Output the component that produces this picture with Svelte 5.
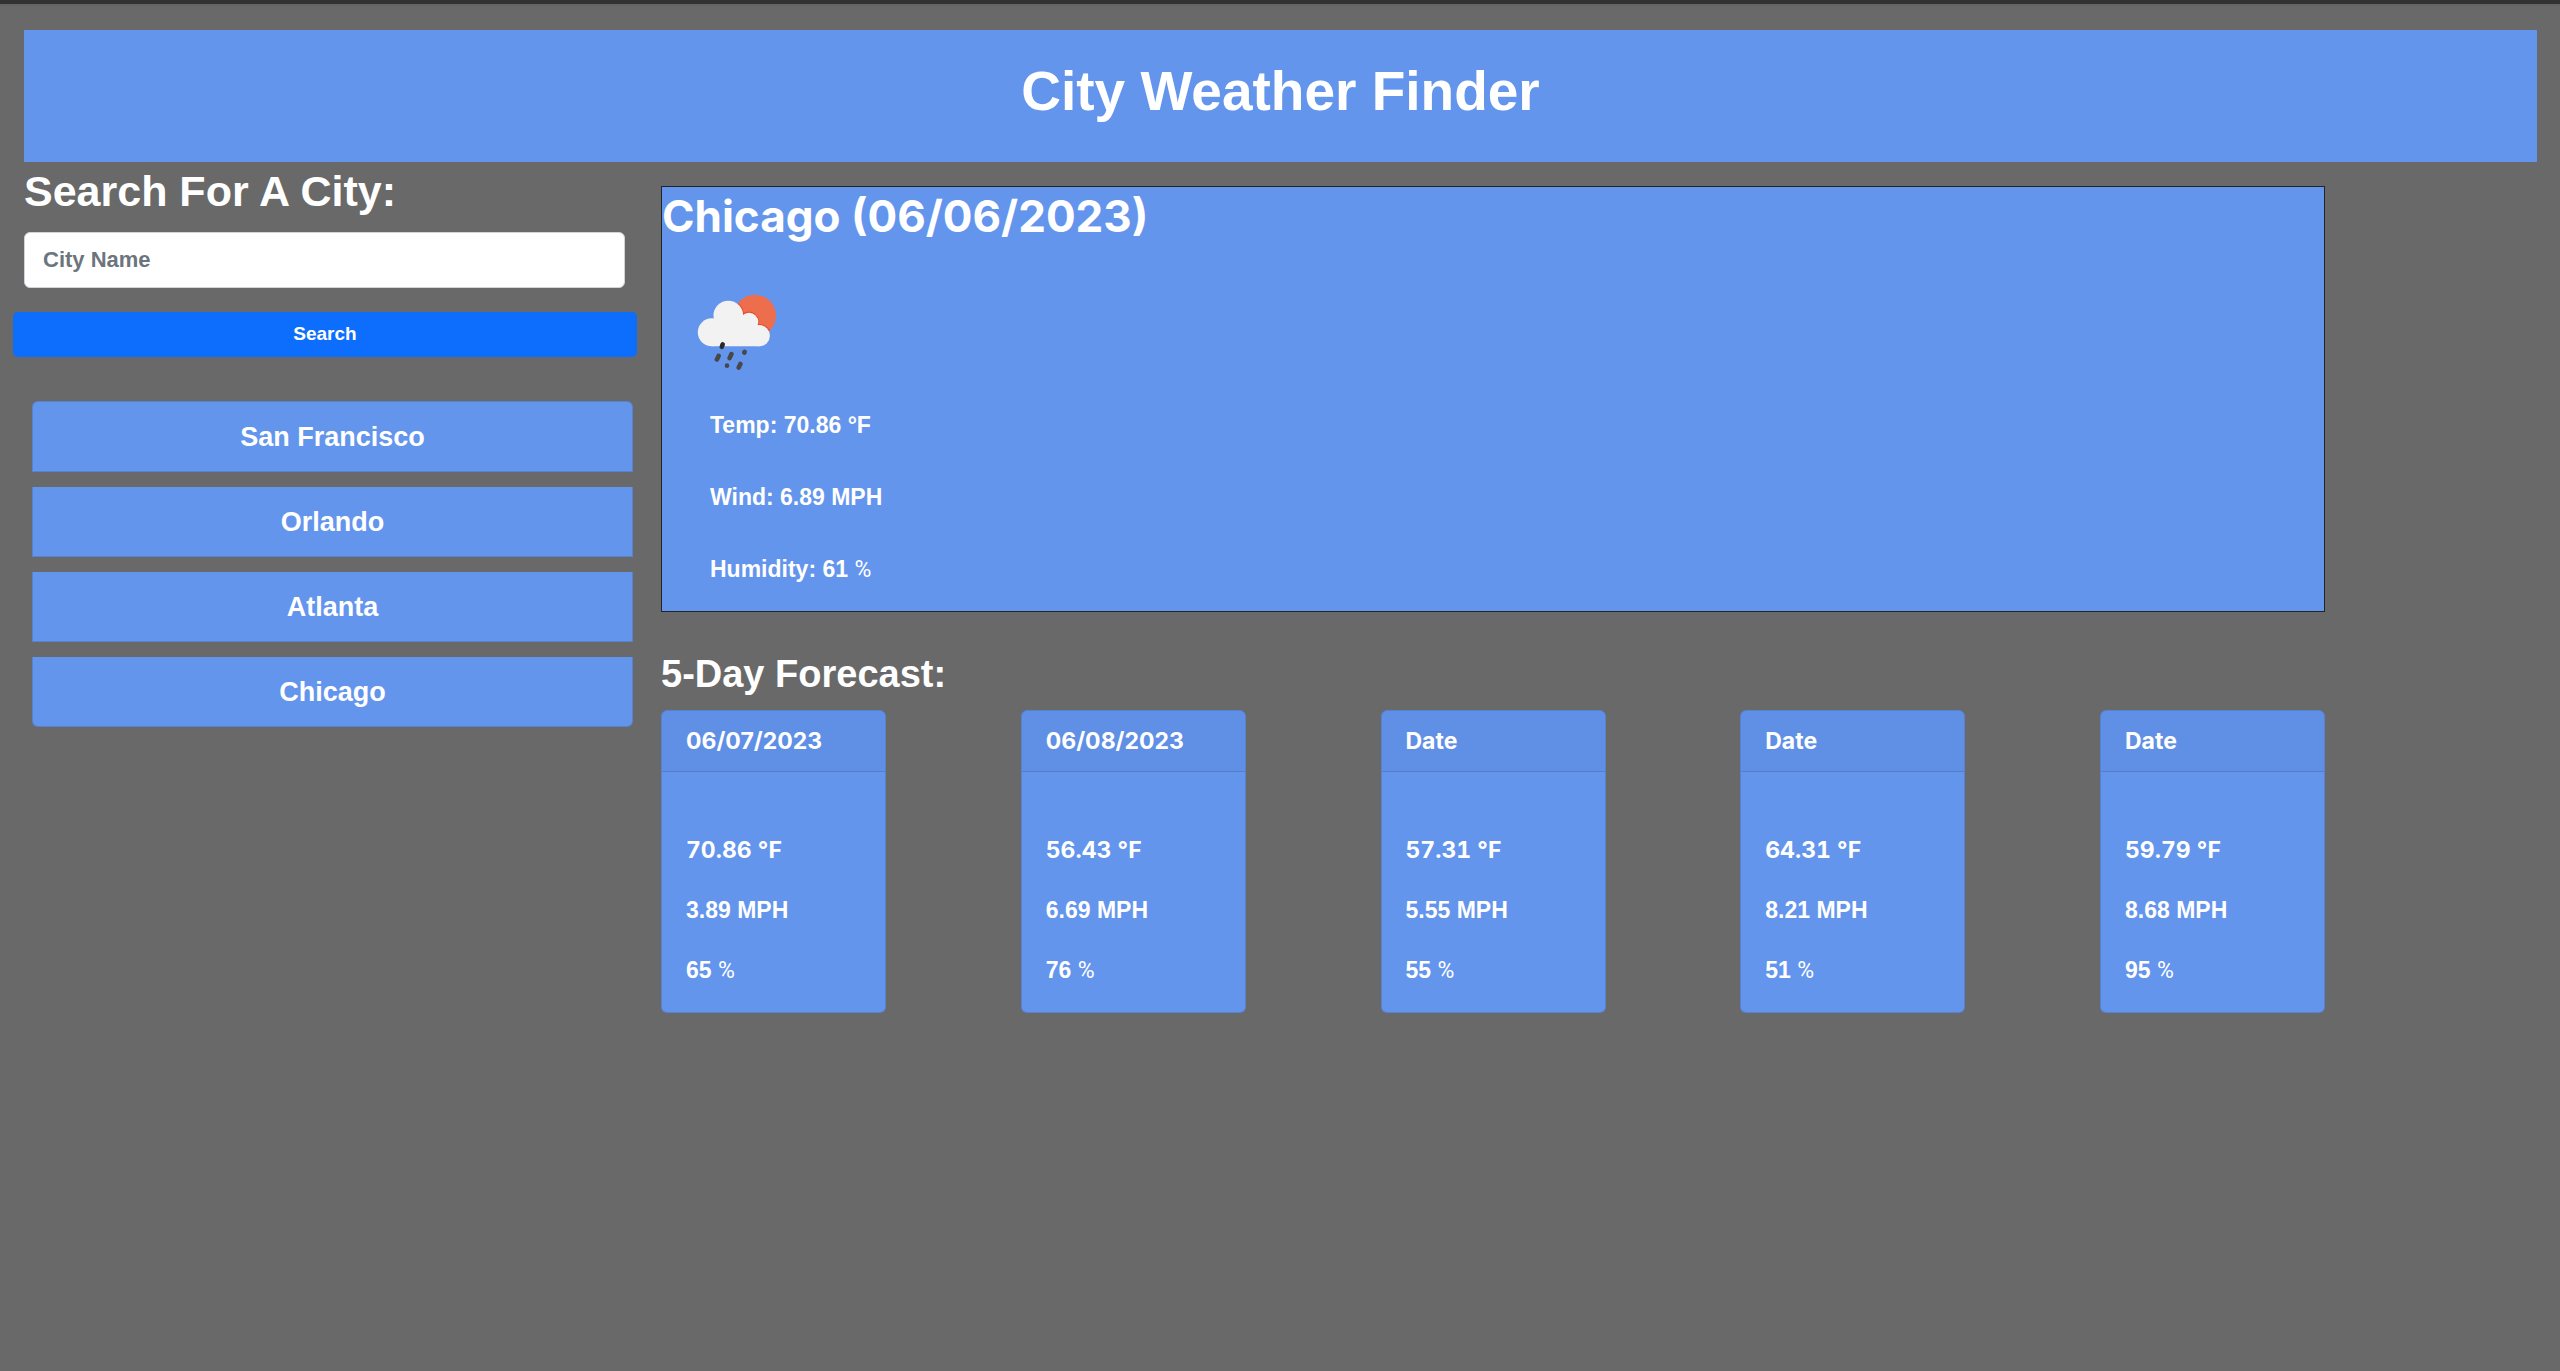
<script>
  let city = $state('');

  const savedCities = ['San Francisco', 'Orlando', 'Atlanta', 'Chicago'];

  const forecast = [
    { date: '06/07/2023', temp: '70.86', wind: '3.89', humidity: '65' },
    { date: '06/08/2023', temp: '56.43', wind: '6.69', humidity: '76' },
    { date: 'Date', temp: '57.31', wind: '5.55', humidity: '55' },
    { date: 'Date', temp: '64.31', wind: '8.21', humidity: '51' },
    { date: 'Date', temp: '59.79', wind: '8.68', humidity: '95' },
  ];
</script>

<div class="page">
  <header>
    <h1>City Weather Finder</h1>
  </header>

  <div class="layout">
    <aside>
      <form onsubmit={(e) => e.preventDefault()}>
        <label for="city">Search For A City:</label>
        <input id="city" type="text" placeholder="City Name" bind:value={city} />
        <button class="search" type="submit">Search</button>
      </form>

      <div class="history">
        {#each savedCities as name}
          <button type="button">{name}</button>
        {/each}
      </div>
    </aside>

    <main>
      <section class="current">
        <h2>Chicago (06/06/2023)</h2>
        <svg viewBox="14 10 84 80" role="img" aria-label="Rain with sun">
          <defs>
            <clipPath id="sun"><circle cx="75" cy="35.7" r="21" /></clipPath>
          </defs>
          <circle cx="75" cy="35.7" r="21" fill="#ec6e4c" />
          <g clip-path="url(#sun)" fill="none" stroke="#e94e2b" stroke-width="2">
            <circle cx="48.3" cy="35.5" r="14.8" />
            <circle cx="69" cy="42" r="9.4" />
            <circle cx="79.3" cy="55.7" r="10.8" />
          </g>
          <g fill="#f2f2f2">
            <circle cx="48.3" cy="35.5" r="14.8" />
            <circle cx="31.8" cy="52.3" r="14" />
            <circle cx="69" cy="42" r="9.3" />
            <circle cx="79.3" cy="55.7" r="10.6" />
            <path d="M31.8 66.3V40l8-4h24l10 8 5.5 3v19.3z" />
          </g>
          <g fill="none" stroke="#484848" stroke-width="4.6" stroke-linecap="round">
            <path d="M42.7 64.4l-.9 2.4" stroke="#2a2a2a" />
            <path d="M38.6 75.9l-1.7 3.6M51.4 74.1l-1.8 4M64.6 71.8l-.3.8M47 85.6v.1M60.4 84l-1.7 3.6" />
          </g>
        </svg>
        <p>Temp: 70.86 °F</p>
        <p>Wind: 6.89 MPH</p>
        <p>Humidity: 61 <span class="unit">%</span></p>
      </section>

      <section class="forecast">
        <h3>5-Day Forecast:</h3>
        <div class="cards">
          {#each forecast as day}
            <article>
              <h4>{day.date}</h4>
              <div class="readings">
                <p class="wide">{day.temp} °F</p>
                <p>{day.wind} MPH</p>
                <p>{day.humidity} <span class="unit">%</span></p>
              </div>
            </article>
          {/each}
        </div>
      </section>
    </main>
  </div>
</div>

<style>
  :global(body) {
    background: #696969;
  }

  .page {
    border-top: 4px solid #333;
    color: #fff;
    font: bold 23px/36px 'Liberation Sans', Arial, sans-serif;
  }

  .page::before {
    content: '';
    display: block;
    height: 2px;
    background: #656565;
  }

  h1, h2, h3, h4, p {
    margin: 0;
  }

  header {
    margin: 24px 23px 0 24px;
    padding: 25px 0 35px;
    background: #6495ed;
    text-align: center;
  }

  h1 {
    font-size: 55px;
    line-height: 72px;
  }

  .layout {
    display: flex;
    align-items: flex-start;
  }

  aside {
    box-sizing: border-box;
    width: 25%;
    padding: 0 3px 0 13px;
  }

  form {
    display: flex;
    flex-direction: column;
  }

  label {
    margin-left: 11px;
    font-size: 43px;
    line-height: 58px;
  }

  input {
    box-sizing: border-box;
    height: 56px;
    margin: 12px 12px 24px 11px;
    padding: 0 18px;
    border: 1px solid #ced4da;
    border-radius: 6px;
    background: #fff;
    color: #212529;
    font: bold 22px/36px 'Liberation Sans', Arial, sans-serif;
  }

  input::placeholder {
    color: #6c757d;
    opacity: 1;
  }

  button {
    border: 0;
    color: #fff;
    font: inherit;
    cursor: pointer;
  }

  .search {
    height: 45px;
    padding: 0 0 2px;
    border-radius: 5px;
    background: #0d6efd;
    font-size: 19px;
  }

  .history {
    display: flex;
    flex-direction: column;
    gap: 15px;
    margin: 44px 4px 0 19px;
  }

  .history button {
    padding: 17px 24px 16px;
    border: 1px solid rgba(0, 0, 0, 0.125);
    border-top: 0;
    background: #6495ed;
    font-size: 27px;
  }

  .history button:first-child {
    border-top: 1px solid rgba(0, 0, 0, 0.125);
    border-radius: 6px 6px 0 0;
  }

  .history button:last-child {
    border-radius: 0 0 6px 6px;
  }

  main {
    width: 65%;
    margin: 24px 0 0 21px;
  }

  .current {
    display: flex;
    flex-direction: column;
    padding-bottom: 24px;
    border: 1px solid #212529;
    background: #6495ed;
  }

  h2 {
    font: bold 44px/58px Inter, 'Liberation Sans', sans-serif;
  }

  svg {
    width: 84px;
    height: 80px;
    margin: 45px 0 37px 32px;
  }

  .current p {
    margin-left: 48px;
  }

  .current p + p {
    margin-top: 36px;
  }

  .unit {
    font-family: Roboto, sans-serif;
    font-weight: normal;
    line-height: 1;
  }

  .forecast {
    padding-top: 37px;
  }

  h3 {
    font-size: 38px;
    line-height: 50px;
  }

  .cards {
    display: flex;
    justify-content: space-between;
    margin-top: 11px;
  }

  article {
    box-sizing: border-box;
    width: 225px;
    border: 1px solid rgba(0, 0, 0, 0.125);
    border-radius: 6px;
    background: #6495ed;
  }

  h4 {
    padding: 12px 24px;
    border-bottom: 1px solid rgba(0, 0, 0, 0.125);
    background: rgba(0, 0, 0, 0.03);
    font: bold 23px/36px Inter, 'Liberation Sans', sans-serif;
  }

  .readings {
    display: flex;
    flex-direction: column;
    gap: 24px;
    padding: 60px 24px 24px;
  }

  .wide {
    font-family: Inter, 'Liberation Sans', sans-serif;
    font-variant-numeric: tabular-nums;
  }
</style>
